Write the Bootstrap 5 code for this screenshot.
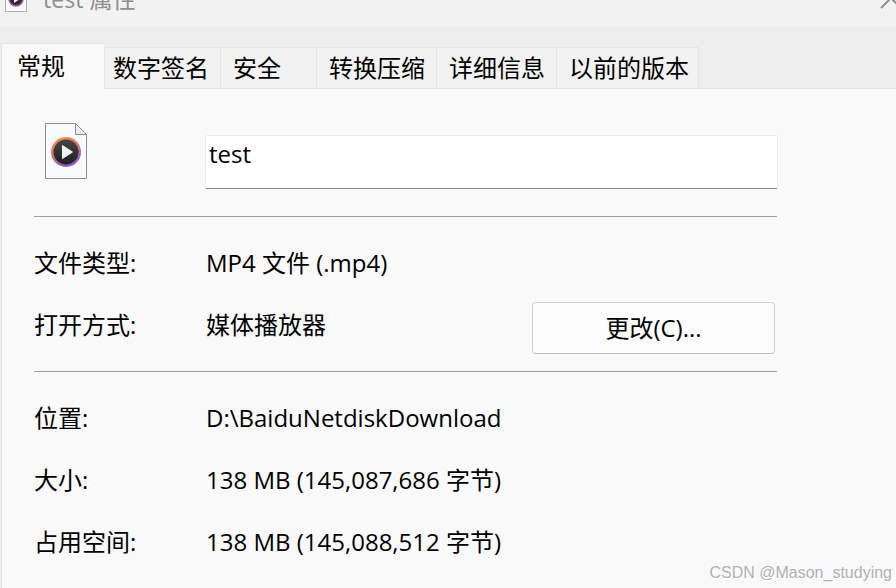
<!DOCTYPE html>
<html lang="zh-CN">
<head>
<meta charset="utf-8">
<meta name="viewport" content="width=device-width, initial-scale=1">
<title>test 属性</title>
<link rel="stylesheet" href="https://cdn.jsdelivr.net/npm/bootstrap@5.3.0/dist/css/bootstrap.min.css">
<style>
body { font-family: "Open Sans", "Noto Sans CJK SC", sans-serif; font-size: 24px; line-height: 32px; color: #000; background: #eee; }
.title-strip { height: 27px; background: #f2f2f2; color: #8f8f8f; padding-left: 4px; }
.title-name { line-height: 32px; margin: -17px 0 0 15px; }
.title-icon { margin-top: -16px; }
.tab-strip { padding: 16px 0 0 1px; }
.tab-strip .nav-link { height: 41px; margin: 0; padding: 0 4px 0 12px; color: #000; text-align: left; background: #f2f2f2; border: 1px solid #e5e5e5; border-width: 1px 0 0 1px; border-radius: 0; line-height: 40px; }
.tab-strip .nav-link.active { width: 103px; height: 46px; padding: 0 4px 2px 15px; background: #f9f9f9; color: #000; margin-bottom: -1px; }
.tab-strip .tab-sign { width: 116px; padding-left: 8px; }
.tab-strip .tab-safe { width: 96px; }
.tab-strip .tab-mid { width: 120px; }
.tab-strip .tab-last { width: 143px; border-right-width: 1px; }
.sheet { margin-left: 1px; padding: 34px 119px 0 32px; background: #f9f9f9; border-left: 1px solid #e5e5e5; border-top: 1px solid #e5e5e5; }
.field-label { width: 172px; flex: none; }
.name-col { width: 171px; flex: none; padding-left: 11px; }
.name-box { height: 54px; margin-top: 12px; padding: 0 3px 18px; font-size: 24px; color: #000; background: #fff; border: 1px solid #ececec; border-bottom-color: #868686; border-radius: 2px; }
.rule { height: 1px; margin: 0; border: 0; background: #a0a0a0; opacity: 1; }
.name-row { margin: 0 -1px 27px 0; }
.field-group { margin: 0; padding-top: 15px; }
.field-group-ruled { padding-bottom: 15px; }
.field-row { min-height: 62px; }
.change-btn { width: 243px; height: 52px; margin: 6px 2px 0 0; padding: 0; font-size: 24px; color: #000; background: #fdfdfd; border: 1px solid #d0d0d0; border-bottom-color: #bbb; border-radius: 4px; }
.credit { right: 4px; bottom: 3px; font: 16px/24px "Liberation Sans", sans-serif; color: #b0b0b0; text-shadow: 1px 1px 0 #fff; }
</style>
<script src="https://cdn.jsdelivr.net/npm/bootstrap@5.3.0/dist/js/bootstrap.bundle.min.js"></script>
</head>
<body class="min-vh-100 d-flex flex-column overflow-hidden position-relative">
<header class="title-strip d-flex align-items-start overflow-hidden">
  <svg class="title-icon" width="24" height="28" viewBox="0 0 24 28" aria-hidden="true">
    <path d="M1.500 .5h14l7 7v20h-21z" fill="#f8f9fc" stroke="#aaa"/>
    <circle cx="12" cy="15" r="7" fill="#2d2d2d" stroke="#a660a8" stroke-width="1.500"/>
    <path d="M10 11l6 4-6 4z" fill="#eee"/>
  </svg>
  <h1 class="title-name fs-4 fw-normal">test 属性</h1>
  <button type="button" class="btn border-0 p-0 ms-auto d-flex" aria-label="关闭">
    <svg width="16" height="9" viewBox="0 0 16 9" fill="none" stroke="#8f8f8f" stroke-width="2" aria-hidden="true"><path d="M1 8L11-2l10 10"/></svg>
  </button>
</header>
<div class="tab-strip nav d-flex flex-nowrap align-items-end" role="tablist">
  <button type="button" class="nav-link active position-relative" role="tab" aria-selected="true">常规</button>
  <button type="button" class="nav-link tab-sign" role="tab">数字签名</button>
  <button type="button" class="nav-link tab-safe" role="tab">安全</button>
  <button type="button" class="nav-link tab-mid" role="tab">转换压缩</button>
  <button type="button" class="nav-link tab-mid" role="tab">详细信息</button>
  <button type="button" class="nav-link tab-last" role="tab">以前的版本</button>
</div>
<main class="sheet flex-fill">
  <div class="name-row d-flex align-items-start">
    <div class="name-col">
      <svg class="d-block" width="42" height="56" viewBox="0 0 42 56" aria-hidden="true">
        <defs>
          <linearGradient id="ring" x1="0" y1="0" x2=".4" y2="1"><stop offset="0" stop-color="#ff9a3c"/><stop offset=".5" stop-color="#e0706a"/><stop offset="1" stop-color="#8e58c8"/></linearGradient>
          <linearGradient id="disc" x1="0" y1="0" x2="0" y2="1"><stop offset="0" stop-color="#454545"/><stop offset="1" stop-color="#202020"/></linearGradient>
          <linearGradient id="fold" x1="0" y1="1" x2="1" y2="0"><stop offset="0" stop-color="#e2e2e2"/><stop offset="1" stop-color="#fff"/></linearGradient>
        </defs>
        <path d="M.5.5h30l11 11v44H.5z" fill="#f9fafd" stroke="#8c8c8c"/>
        <path d="M30.500.5v11h11z" fill="url(#fold)" stroke="#8c8c8c"/>
        <circle cx="21" cy="29" r="15" fill="url(#ring)"/>
        <circle cx="21" cy="29" r="12.500" fill="url(#disc)"/>
        <path d="M17.500 22.500l10 6.500-10 6.500z" fill="#f0f0f0" stroke="#f0f0f0" stroke-linejoin="round"/>
      </svg>
    </div>
    <input type="text" class="name-box form-control" value="test" aria-label="文件名">
  </div>
  <hr class="rule">
  <dl class="field-group field-group-ruled">
    <div class="field-row d-flex align-items-center"><dt class="field-label fw-normal">文件类型:</dt><dd class="mb-0">MP4 文件 (.mp4)</dd></div>
    <div class="field-row d-flex align-items-center"><dt class="field-label fw-normal">打开方式:</dt><dd class="mb-0 flex-fill">媒体播放器</dd><dd class="mb-0"><button type="button" class="btn change-btn">更改(C)...</button></dd></div>
  </dl>
  <hr class="rule">
  <dl class="field-group">
    <div class="field-row d-flex align-items-center"><dt class="field-label fw-normal">位置:</dt><dd class="mb-0">D:\BaiduNetdiskDownload</dd></div>
    <div class="field-row d-flex align-items-center"><dt class="field-label fw-normal">大小:</dt><dd class="mb-0">138 MB (145,087,686 字节)</dd></div>
    <div class="field-row d-flex align-items-center"><dt class="field-label fw-normal">占用空间:</dt><dd class="mb-0">138 MB (145,088,512 字节)</dd></div>
  </dl>
</main>
<span class="credit position-absolute">CSDN @Mason_studying</span>
</body>
</html>
